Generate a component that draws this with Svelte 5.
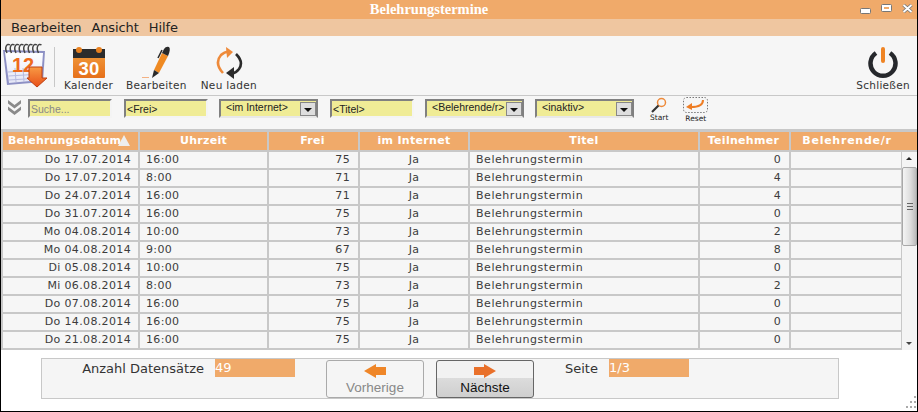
<script>
  const rows = [
    ['Do 17.07.2014','16:00',75,0],['Do 17.07.2014','8:00',71,4],['Do 24.07.2014','16:00',71,4],
    ['Do 31.07.2014','16:00',75,0],['Mo 04.08.2014','10:00',73,2],['Mo 04.08.2014','9:00',67,8],
    ['Di 05.08.2014','10:00',75,0],['Mi 06.08.2014','8:00',73,2],['Do 07.08.2014','16:00',75,0],
    ['Do 14.08.2014','16:00',75,0],['Do 21.08.2014','16:00',75,0]
  ];
  const heads = ['Belehrungsdatum','Uhrzeit','Frei','im Internet','Titel','Teilnehmer','Belehrende/r'];
  const wires = [4,8.500,13,17.500,22,26.500,31,35.500];
</script>

<div class="win">
  <header class="title">
    <span>Belehrungstermine</span>
    <div class="winbtns">
      <svg class="min" width="11" height="6" viewBox="0 0 11 6"><rect x=".5" y=".5" width="10" height="5" rx="1" fill="#fff" stroke="#777"/></svg>
      <svg width="11" height="8" viewBox="0 0 11 8"><rect x=".5" y=".5" width="10" height="7" rx="1" fill="#fff" stroke="#777"/><rect x="3" y="3" width="5" height="2" fill="#f0aa6a"/></svg>
      <svg width="11" height="9" viewBox="0 0 11 9"><path d="M1.500 1 L9.500 8 M9.500 1 L1.500 8" stroke="#777" stroke-width="3.400"/><path d="M1.500 1 L9.500 8 M9.500 1 L1.500 8" stroke="#fff" stroke-width="1.800"/></svg>
    </div>
  </header>
  <nav class="menu"><span>Bearbeiten</span><span>Ansicht</span><span>Hilfe</span></nav>

  <div class="toolbar">
    <svg class="logo" width="46" height="46" viewBox="0 0 46 46">
      <defs>
        <linearGradient id="pg" x1="0" y1="0" x2="0" y2="1"><stop offset="0" stop-color="#fff"/><stop offset="1" stop-color="#e4e6f6"/></linearGradient>
        <linearGradient id="ar" x1="0" y1="0" x2="0" y2="1"><stop offset="0" stop-color="#f89a44"/><stop offset="1" stop-color="#e84f18"/></linearGradient>
        <linearGradient id="ka" x1="0" y1="0" x2="0" y2="1"><stop offset="0" stop-color="#f2a040"/><stop offset="1" stop-color="#e6701a"/></linearGradient>
      </defs>
      <path d="M0 7 L42 8 L40 39 L4 42 Z" fill="#8d90c4"/>
      <path d="M2 9 L40 10 L38 37 L6 40 Z" fill="url(#pg)"/>
      <path d="M5 29 L38 27 M5.500 33 L38 31 M6 37 L38 35 M12 25 L13 39 M20 25 L21 39 M28 25 L29 38" stroke="#b7bbe0" stroke-width="1" fill="none"/>
      {#each wires as x}
        <path d="M{x} 10 C{x - 3} 4 {x} 0 {x + 3} 2" fill="none" stroke="#444" stroke-width="1.500"/>
      {/each}
      <text x="9" y="29" class="cal12">12</text>
      <path d="M26 24 H39 V35 H44 L34 44 L24 35 H26 Z" fill="url(#ar)" stroke="#c04010" stroke-width="1"/>
    </svg>
    <span class="sep"></span>
    <div class="tool kal">
      <svg width="32" height="34" viewBox="0 0 32 34">
        <rect x="0" y="3" width="32" height="29" rx="1" fill="url(#ka)"/>
        <rect x="0" y="3" width="32" height="9" fill="#2c2c2c"/>
        <circle cx="6" cy="4" r="3" fill="#e8801e"/><circle cx="26" cy="4" r="3" fill="#e8801e"/>
        <text x="16" y="29" class="cal30">30</text>
      </svg>
      <span>Kalender</span>
    </div>
    <div class="tool bea">
      <svg width="32" height="34" viewBox="0 0 32 34">
        <path d="M14 24 L22 7 L28 10 L19 27 Z" fill="#ef8a22"/>
        <path d="M22 7 L24 3 Q26 0 29 1 Q31 3 28 10 Z" fill="#2a2a2a"/>
        <path d="M18 12 L22 4" stroke="#2a2a2a" stroke-width="1.500"/>
        <path d="M14 24 L19 27 L12 32 Z" fill="#2a2a2a"/>
        <path d="M2 31.500 H9" stroke="#f3b183" stroke-width="1"/>
      </svg>
      <span>Bearbeiten</span>
    </div>
    <div class="tool neu">
      <svg width="28" height="34" viewBox="0 0 28 34">
        <path d="M8 27 Q-1 17 6 9 Q9 6 14 5.500" fill="none" stroke="#ee8a3a" stroke-width="2.600"/>
        <path d="M11 1 L18 6 L12 12 Z" fill="#ee8a3a"/>
        <path d="M21 8 Q29 16 24 23 Q21 27 17 27.500" fill="none" stroke="#2b2b2b" stroke-width="2.600"/>
        <path d="M19 21 L11 27 L19 33 Z" fill="#2b2b2b"/>
      </svg>
      <span>Neu laden</span>
    </div>
    <div class="tool close">
      <svg width="30" height="34" viewBox="0 0 30 34">
        <path d="M8 7 A12.500 12.500 0 1 0 22 7" fill="none" stroke="#26282c" stroke-width="4.500"/>
        <rect x="13" y="1" width="4" height="16" rx="2" fill="#ef8424"/>
      </svg>
      <span>Schließen</span>
    </div>
  </div>

  <div class="filters">
    <svg class="chev" width="15" height="17" viewBox="0 0 15 17"><path d="M1 1 L7.500 6 L14 1 V4.500 L7.500 9.500 L1 4.500 Z M1 7.500 L7.500 12.500 L14 7.500 V11 L7.500 16 L1 11 Z" fill="#8a8a8a"/></svg>
    <input class="f w84 search" placeholder="Suche..." />
    <input class="f w84" value="&lt;Frei&gt;" />
    <div class="f sel"><span>&lt;im Internet&gt;</span><b class="arrow"></b></div>
    <input class="f w84 titel" value="&lt;Titel&gt;" />
    <div class="f sel"><span>&lt;Belehrende/r&gt;</span><b class="arrow"></b></div>
    <div class="f sel"><span>&lt;inaktiv&gt;</span><b class="arrow"></b></div>
    <div class="mini start">
      <svg width="18" height="16" viewBox="0 0 18 16"><circle cx="11.500" cy="5.500" r="4" fill="none" stroke="#ee8a3a" stroke-width="1.500"/><path d="M8.500 8.500 L2 15" stroke="#333" stroke-width="2.200"/></svg>
      <span>Start</span>
    </div>
    <div class="mini reset">
      <svg width="25" height="17" viewBox="0 0 25 17"><rect x=".5" y=".5" width="24" height="15" rx="3" fill="none" stroke="#777" stroke-dasharray="1.500 1.500"/><path d="M20 3 Q20 10 8 10" fill="none" stroke="#ee7d24" stroke-width="2"/><path d="M9 6 L3 10 L9 13 Z" fill="#ee7d24"/></svg>
      <span>Reset</span>
    </div>
  </div>

  <div class="grid">
    <div class="tr th">
      {#each heads as h, i}
        <div class="c c{i}">{h}{#if i === 0}<i class="sort"></i>{/if}</div>
      {/each}
    </div>
    <div class="body">
      <div class="rows">
        {#each rows as r}
          <div class="tr">
            <div class="c c0">{r[0]}</div>
            <div class="c c1">{r[1]}</div>
            <div class="c c2">{r[2]}</div>
            <div class="c c3">Ja</div>
            <div class="c c4">Belehrungstermin</div>
            <div class="c c5">{r[3]}</div>
            <div class="c c6"></div>
          </div>
        {/each}
      </div>
      <div class="scroll">
        <span class="up"></span>
        <div class="thumb"><em></em></div>
        <span class="down"></span>
      </div>
    </div>
  </div>

  <div class="footer">
    <div class="panel">
      <span class="lbl anzahl">Anzahl Datensätze</span>
      <span class="val">49</span>
      <button class="btn prev">
        <svg width="22" height="14" viewBox="0 0 22 14"><path d="M0 7 L12 0 V3 H22 V11 H12 V14 Z" fill="#ef8628"/></svg>
        <span>Vorherige</span>
      </button>
      <button class="btn next">
        <svg width="22" height="14" viewBox="0 0 22 14"><path d="M22 7 L10 0 V3 H0 V11 H10 V14 Z" fill="#e9702a"/></svg>
        <span>Nächste</span>
      </button>
      <span class="lbl seite">Seite</span>
      <span class="val">1/3</span>
    </div>
    <svg class="grip" width="16" height="16" viewBox="0 0 16 16" fill="#aaa"><rect x="13" y="1" width="2" height="2"/><rect x="9" y="6" width="2" height="2"/><rect x="13" y="6" width="2" height="2"/><rect x="5" y="11" width="2" height="2"/><rect x="9" y="11" width="2" height="2"/><rect x="13" y="11" width="2" height="2"/></svg>
  </div>
</div>

<style>
  :global(body) { margin: 0; background: #fff; }
  .win {
    width: 918px; height: 412px; box-sizing: border-box; overflow: hidden;
    border: 1px solid #000; border-top: 0; background: #fff;
    display: flex; flex-direction: column; font-family: "DejaVu Sans", sans-serif;
  }
  .title {
    height: 19px; background: #f0aa6a; color: #fff; position: relative;
    display: flex; align-items: center; justify-content: center; padding-right: 60px;
    font: bold 14.500px "Liberation Serif", serif;
  }
  .winbtns { position: absolute; right: 4px; top: 4px; display: flex; align-items: flex-start; gap: 10px; }
  .winbtns svg { display: block; }
  .winbtns .min { margin-top: 4px; }
  .menu {
    height: 17px; background: #efc6a0; display: flex; gap: 10px; padding-left: 10px;
    font: 13px/17px "DejaVu Sans", sans-serif; color: #222; letter-spacing: -.1px;
  }
  .toolbar {
    height: 59px; background: #f6f6f6; border-bottom: 1px solid #c8c8c8;
    display: flex; align-items: flex-start; box-sizing: content-box; position: relative;
  }
  .logo { margin: 7px 0 0 2px; }
  .sep { width: 1px; height: 40px; background: #c8c8c8; margin: 11px 0 0 5px; }
  .cal12 { font: bold 20px "Liberation Sans", sans-serif; fill: #ee6a1c; }
  .cal30 { font: bold 18.500px "Liberation Sans", sans-serif; fill: #fff; text-anchor: middle; }
  .tool {
    display: flex; flex-direction: column; align-items: center; gap: 0;
    font-size: 10.500px; line-height: 14px; color: #333; letter-spacing: .3px; padding-top: 10px;
  }
  .tool svg { height: 34px; display: block; margin-bottom: -2px; }
  .tool span { white-space: nowrap; }
  .kal { margin-left: 9px; }
  .bea { margin-left: 13px; }
  .neu { margin-left: 14px; }
  .close { margin-left: auto; margin-right: 7px; }
  .filters {
    height: 33px; background: #f6f6f6;
    display: flex; align-items: flex-start; padding-left: 6px; gap: 11px; box-sizing: content-box;
  }
  .chev { margin: 3px -5px 0 0; width: 15px; }
  .f {
    box-sizing: border-box; height: 19px; margin: 3px 0 0; padding: 0 0 0 1px;
    border: 2px solid #808080; border-right-color: #f4f4f4; border-bottom-color: #f4f4f4;
    background: #f0ec96; font: 10.500px "Liberation Sans", sans-serif; color: #222; outline: 0; border-radius: 0;
  }
  .search { margin-right: 1px; }
  .search::placeholder { color: #888; opacity: 1; }
  .w84 { width: 84px; }
  .titel { margin-left: 1px; }
  .sel { width: 99px; display: flex; justify-content: space-between; padding: 0 0 0 5px; line-height: 12px; border-right-color: #808080; border-bottom-color: #e8e8e8; }
  .sel span { white-space: nowrap; }
  .arrow {
    width: 16px; height: 14px; background: #dedede; border: 1px solid #888; margin-top: 1px; box-sizing: border-box;
    position: relative; display: block; flex: none;
  }
  .arrow::after {
    content: ""; position: absolute; left: 3px; top: 5px;
    border: 4px solid transparent; border-top: 4px solid #111; border-bottom: 0;
  }
  .mini { display: flex; flex-direction: column; align-items: center; font-size: 7.500px; line-height: 9px; color: #222; padding-top: 1px; }
  .mini svg { display: block; }
  .start { margin-left: 5px; }
  .reset { margin-left: 4px; }
  .grid { background: #c8c8c8; }
  .tr { display: flex; height: 18px; box-sizing: border-box; }
  .c {
    box-sizing: border-box; height: 16px; margin: 0 2px 2px 0; background: #f6f6f6;
    font-size: 11px; line-height: 16px; color: #3c3c3c; padding: 0 6px; letter-spacing: .35px; white-space: nowrap; overflow: hidden;
  }
  .tr .c:first-child { margin-left: 2px; }
  .c0 { width: 135px; text-align: right; padding-right: 7px; }
  .c1 { width: 127px; }
  .c2 { width: 89px; text-align: right; padding-right: 8px; }
  .c3 { width: 108px; text-align: center; }
  .c4 { width: 228px; letter-spacing: .55px; }
  .c5 { width: 89px; text-align: right; padding-right: 8px; }
  .c6 { width: 110px; margin-right: 0; }
  .th { height: 23px; padding-top: 3px; }
  .th .c { height: 18px; line-height: 18px; background: #f0aa6a; color: #fff; font-weight: bold; text-align: center; letter-spacing: .3px; }
  .th .c0 { position: relative; text-align: left; padding-left: 5px; letter-spacing: .2px; overflow: visible; }
  .th .c6 { width: 126px; padding: 0 14px 0 0; letter-spacing: .75px; }
  .sort {
    position: absolute; left: 115px; top: 3px;
    border: 6px solid transparent; border-bottom: 11px solid #eee; border-top: 0;
  }
  .body { display: flex; height: 198px; overflow: hidden; }
  .rows { width: 901px; flex: none; }
  .scroll {
    width: 15px; flex: none; background: #f4f4f4; position: relative; display: flex; flex-direction: column;
  }
  .up, .down { height: 15px; position: relative; display: block; }
  .up::after { content: ""; position: absolute; left: 4px; top: 5px; border: 3px solid transparent; border-bottom: 3px solid #222; border-top: 0; }
  .down { margin-top: auto; }
  .down::after { content: ""; position: absolute; left: 4px; top: 7px; border: 3px solid transparent; border-top: 3px solid #444; border-bottom: 0; }
  .thumb {
    height: 79px; box-sizing: border-box; background: linear-gradient(90deg, #f4f4f4, #dcdcdc 60%, #bbb);
    border: 1px solid #a8a8a8; border-radius: 2px; display: flex; align-items: center; justify-content: center;
  }
  .thumb em { width: 6px; height: 5px; border-top: 1px solid #666; border-bottom: 1px solid #666; position: relative; display: block; background: linear-gradient(#0000 40%, #666 40%, #666 60%, #0000 60%); }
  .footer { flex: 1; position: relative; padding: 8px 0 0 40px; background: #fff; }
  .panel {
    width: 798px; height: 41px; box-sizing: border-box; background: #f5f5f5; border: 1px solid #c8c8c8;
    display: flex; align-items: flex-start;
    font: 13px/19px "DejaVu Sans", sans-serif; color: #333;
  }
  .lbl { white-space: nowrap; }
  .anzahl { width: 162px; text-align: right; margin-right: 11px; }
  .val { width: 80px; height: 18px; background: #f0aa6a; color: #fff; line-height: 18px; }
  .btn {
    width: 98px; height: 38px; margin-top: 1px; box-sizing: border-box; padding: 3px 0 0;
    border: 1px solid #aaa; border-radius: 3px; display: flex; flex-direction: column; align-items: center;
    font: 13.500px/16px "Liberation Sans", sans-serif; color: #111;
    background: linear-gradient(#f2f2f2 0 47%, #dcdcdc 47%, #cfcfcf);
  }
  .btn svg { display: block; margin-bottom: 2px; }
  .prev { margin-left: 31px; background: #f5f5f5; color: #888; }
  .next { margin-left: 12px; border-color: #666; }
  .seite { margin-left: 31px; width: 44px; }
  .grip { position: absolute; right: 0; bottom: 0; }
</style>
